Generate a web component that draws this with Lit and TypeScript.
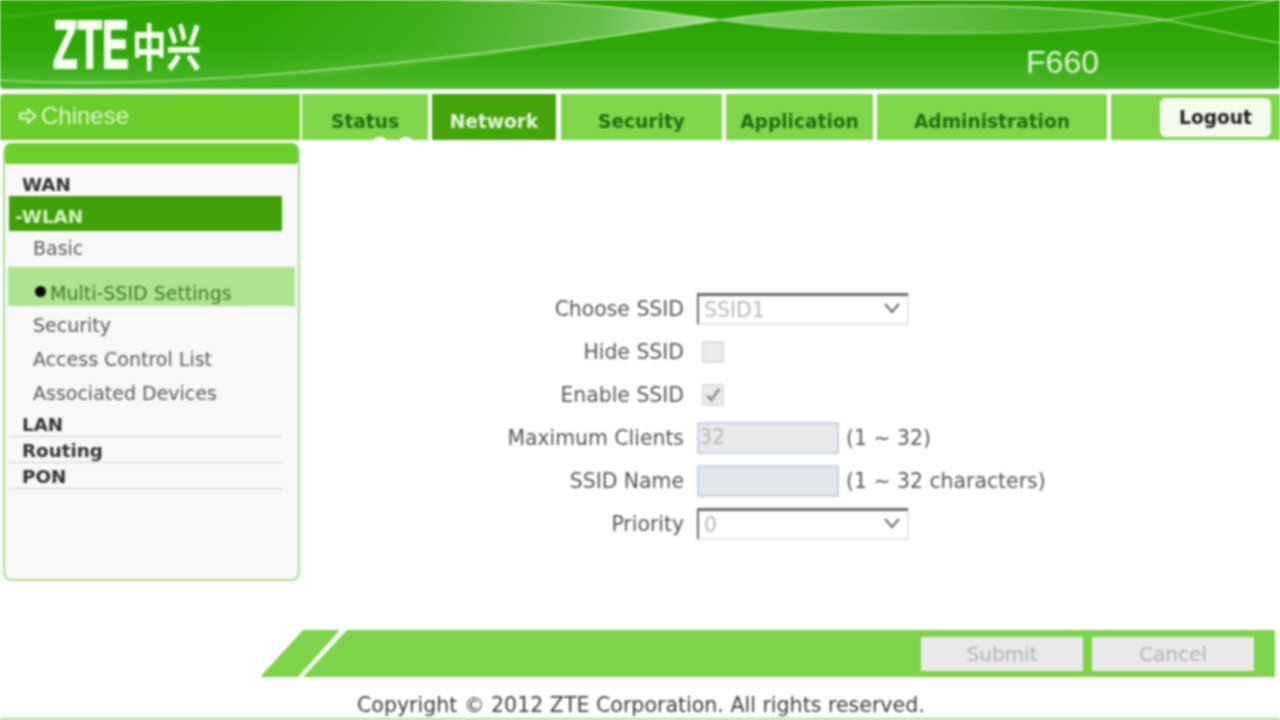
import { LitElement, html, css } from "lit";
import { customElement } from "lit/decorators.js";

@customElement("app-root")
export class AppRoot extends LitElement {
  static styles = css`
    :host { display: block; width: 1280px; height: 720px; overflow: hidden; background: #fff; font-family: "DejaVu Sans", Verdana, sans-serif; color: #555; }
    .page { width: 1280px; height: 720px; display: flex; flex-direction: column; filter: blur(0.8px); border-bottom: 2px solid #a8dc90; box-sizing: border-box; }
    .banner { position: relative; flex: none; height: 89px; background: linear-gradient(180deg, #2ba500 0%, #2fa80a 55%, #4db92c 100%); border-radius: 0 0 4px 4px; display: flex; justify-content: space-between; overflow: hidden; }
    .waves { position: absolute; inset: 0; width: 100%; height: 100%; }
    .logo { position: relative; display: flex; align-items: center; padding: 0 0 0 53px; height: 89px; color: #f6fff0; margin-top: -1px; }
    .zte { font: 700 68px/1 "Liberation Sans", Arial, sans-serif; display: block; width: 77px; transform: scaleX(.59); transform-origin: left center; white-space: nowrap; -webkit-text-stroke: 2px #f6fff0; }
    .zx { font: 700 50px/1 "Noto Sans CJK SC", sans-serif; display: block; width: 70px; margin-left: 2px; transform: scaleX(.69); transform-origin: left center; white-space: nowrap; }
    .model { position: relative; color: #dff4d2; font: 400 32px/1 "Liberation Sans", Arial, sans-serif; padding: 46px 181px 0 0; }

    nav { position: relative; flex: none; height: 46px; margin-top: 5px; display: flex; gap: 4px; font-weight: 700; font-size: 18.6px; }
    .lang { width: 300px; background: #6bcd2a; border-radius: 4px 0 0 0; color: #dff5cc; display: flex; align-items: center; gap: 3px; padding: 0 0 3px 18px; box-sizing: border-box; font: 400 24px/1 "Liberation Sans", Arial, sans-serif; }
    .lang svg { width: 20px; height: 18px; }
    .tab { background: #80d64a; color: #1f6f10; display: flex; justify-content: center; align-items: flex-end; padding-bottom: 8px; box-sizing: border-box; white-space: nowrap; }
    .tab.on { background: #45a40c; color: #e6f6dc; }
    .t1 { width: 126px; margin-left: -2px; } .t2 { width: 124px; } .t3 { width: 161px; margin-left: 1px; } .t4 { width: 147px; } .t5 { width: 230px; }
    .rest { flex: 1; background: #80d64a; display: flex; justify-content: flex-end; padding: 4px 9px 3px 0; }
    .logout { width: 111px; background: #f4faee; color: #222; border-radius: 6px; display: flex; align-items: center; justify-content: center; }
    .blob { position: absolute; top: 43px; width: 14px; height: 10px; border-radius: 50%; background: #fff; }
    .b1 { left: 373px; } .b2 { left: 399px; }

    main { flex: none; height: 490px; display: flex; }
    .side { flex: none; width: 297px; height: 438px; margin: 3px 0 0 3px; box-sizing: border-box; border: 2px solid #aadd94; border-top: 0; border-radius: 8px; background: #f8f8f8; overflow: hidden; display: flex; flex-direction: column; }
    .side-top { flex: none; height: 21px; background: #6ccf2c; border-radius: 0 0 6px 6px; margin: 0 -2px 0; }
    .menu { padding: 10px 16px 0 4px; display: flex; flex-direction: column; font-size: 19px; }
    .group { height: 26px; line-height: 28px; padding-left: 13px; font-weight: 700; font-size: 18.3px; color: #333; box-sizing: border-box; }
    .group.line { border-bottom: 1px solid #cfcfcf; }
    .group.lan { margin-top: 3px; }
    .group.first { height: 22px; line-height: 22px; }
    .group.open { background: #419f08; color: #d9f2c8; height: 35px; line-height: 42px; padding-left: 6px; border-radius: 1px; }
    .item { padding-left: 24px; color: #5a5a5a; height: 34px; line-height: 38px; white-space: nowrap; }
    .item.sel { height: 39px; line-height: 52px; margin: 0 -13px 0 -1px; padding-left: 27px; background: #aee38f; color: #3c7d28; }
    .dot { display: inline-block; width: 11px; height: 11px; border-radius: 50%; background: #0a0a0a; margin-right: 4px; vertical-align: 3px; }
    .item.basic { height: 36px; line-height: 34px; }

    .form { flex: 1; padding-top: 147px; display: grid; grid-template-columns: 384px auto; grid-auto-rows: 43px; column-gap: 13px; align-items: center; justify-content: start; font-size: 20.4px; color: #565656; }
    .lbl { text-align: right; white-space: nowrap; }
    .ctl { display: flex; align-items: center; gap: 7px; white-space: nowrap; }
    .sel-box { width: 212px; height: 32px; box-sizing: border-box; border: 2px solid #e4e4e4; border-top: 3px solid #6c6c6c; border-left: 2px solid #6c6c6c; background: #fff; color: #b9b9b9; display: flex; align-items: center; justify-content: space-between; padding: 2px 6px 0 5px; font-size: 20.5px; }
    .sel-box svg { width: 18px; height: 12px; margin-top: -4px; }
    .check { width: 22px; height: 22px; margin-left: 5px; box-sizing: border-box; background: #ebebeb; border: 2px solid #dedede; display: flex; align-items: center; justify-content: center; }
    .check svg { width: 18px; height: 18px; }
    .input { width: 142px; height: 32px; box-sizing: border-box; border: 2px solid #c3d6e4; background: #e9e9e9; color: #b9b9b9; font-size: 20.5px; line-height: 26px; }
    .input.name { background: #e3e7ec; }

    .actions { flex: none; height: 47px; margin-left: 260px; width: 1015px; display: flex; }
    .slash { flex: none; width: 80px; margin-right: -37px; background: #7dd44b; clip-path: polygon(43px 0, 80px 0, 38px 100%, 0 100%); }
    .bar { flex: 1; background: #7dd44b; clip-path: polygon(44px 0, 100% 0, 100% 100%, 0 100%); display: flex; justify-content: flex-end; align-items: center; gap: 9px; padding: 1px 21px 0 0; }
    .btn { width: 162px; height: 34px; background: #e9e9e9; color: #b4b4b4; display: flex; align-items: center; justify-content: center; font-size: 20px; }
    footer { flex: 1; display: flex; align-items: center; padding: 14px 0 0 357px; font-size: 20.55px; color: #3f3f3f; white-space: nowrap; }
  `;

  render() {
    return html`<div class="page">
      <header class="banner">
        <svg class="waves" viewBox="0 0 1280 89" preserveAspectRatio="none" aria-hidden="true">
          <defs>
            <linearGradient id="w" gradientUnits="userSpaceOnUse" x1="240" x2="720" y1="0" y2="0">
              <stop offset="0" stop-color="#fff" stop-opacity="0"/>
              <stop offset=".4" stop-color="#fff" stop-opacity=".1"/>
              <stop offset=".75" stop-color="#fff" stop-opacity=".28"/>
              <stop offset="1" stop-color="#fff" stop-opacity=".6"/>
            </linearGradient>
            <linearGradient id="l" gradientUnits="userSpaceOnUse" x1="720" x2="1166" y1="0" y2="0">
              <stop offset="0" stop-color="#fff" stop-opacity=".45"/>
              <stop offset=".4" stop-color="#fff" stop-opacity=".28"/>
              <stop offset=".75" stop-color="#fff" stop-opacity=".14"/>
              <stop offset="1" stop-color="#fff" stop-opacity=".2"/>
            </linearGradient>
          </defs>
          <path d="M120 87 C 340 84 520 50 720 20 C 640 8 560 1 460 0 L 300 0 Z" fill="url(#w)"/>
          <path d="M720 20 C 840 2 1040 0 1166 20 C 1040 38 840 38 720 20 Z" fill="url(#l)"/>
          <path d="M0 80 C 180 92 460 60 720 20 C 640 8 560 1 460 0" fill="none" stroke="#d8f4c8" stroke-opacity=".6" stroke-width="1.6"/>
          <path d="M720 20 C 840 2 1040 0 1166 20 C 1200 27 1240 36 1280 43" fill="none" stroke="#d8f4c8" stroke-opacity=".6" stroke-width="1.6"/>
          <path d="M720 20 C 840 38 1040 38 1166 20 C 1200 14 1240 7 1275 0" fill="none" stroke="#d8f4c8" stroke-opacity=".45" stroke-width="1.6"/>
          <path d="M0 18 C 60 10 140 4 230 0" fill="none" stroke="#fff" stroke-opacity=".12" stroke-width="2"/>
        </svg>
        <div class="logo"><span class="zte">ZTE</span><span class="zx">中兴</span></div>
        <div class="model">F660</div>
      </header>
      <nav>
        <div class="lang">
          <svg viewBox="0 0 20 18" aria-hidden="true"><path d="M2 6.5h8V2.5L17.5 9 10 15.5v-4H2z" fill="none" stroke="#dff5cc" stroke-width="2"/></svg>
          <span>Chinese</span>
        </div>
        <div class="tab t1">Status</div>
        <div class="tab t2 on">Network</div>
        <div class="tab t3">Security</div>
        <div class="tab t4">Application</div>
        <div class="tab t5">Administration</div>
        <div class="rest"><div class="logout">Logout</div></div>
        <span class="blob b1"></span><span class="blob b2"></span>
      </nav>
      <main>
        <aside class="side">
          <div class="side-top"></div>
          <div class="menu">
            <div class="group first">WAN</div>
            <div class="group open">-WLAN</div>
            <div class="item basic">Basic</div>
            <div class="item sel"><span class="dot"></span>Multi-SSID Settings</div>
            <div class="item">Security</div>
            <div class="item">Access Control List</div>
            <div class="item">Associated Devices</div>
            <div class="group line lan">LAN</div>
            <div class="group line">Routing</div>
            <div class="group line">PON</div>
          </div>
        </aside>
        <section class="form">
          <div class="lbl">Choose SSID</div>
          <div class="ctl"><div class="sel-box"><span>SSID1</span>${this.chev()}</div></div>
          <div class="lbl">Hide SSID</div>
          <div class="ctl"><div class="check"></div></div>
          <div class="lbl">Enable SSID</div>
          <div class="ctl"><div class="check"><svg viewBox="0 0 16 16" aria-hidden="true"><path d="M3 8.5l3.5 4L13.5 2.5" fill="none" stroke="#8a8a8a" stroke-width="2.2"/></svg></div></div>
          <div class="lbl">Maximum Clients</div>
          <div class="ctl"><div class="input">32</div><span>(1 ~ 32)</span></div>
          <div class="lbl">SSID Name</div>
          <div class="ctl"><div class="input name"></div><span>(1 ~ 32 characters)</span></div>
          <div class="lbl">Priority</div>
          <div class="ctl"><div class="sel-box"><span>0</span>${this.chev()}</div></div>
        </section>
      </main>
      <div class="actions">
        <div class="slash"></div>
        <div class="bar"><div class="btn">Submit</div><div class="btn">Cancel</div></div>
      </div>
      <footer>Copyright © 2012 ZTE Corporation. All rights reserved.</footer>
    </div>`;
  }

  chev() {
    return html`<svg viewBox="0 0 18 12" aria-hidden="true"><path d="M2 2l7 8 7-8" fill="none" stroke="#666" stroke-width="2"/></svg>`;
  }
}
